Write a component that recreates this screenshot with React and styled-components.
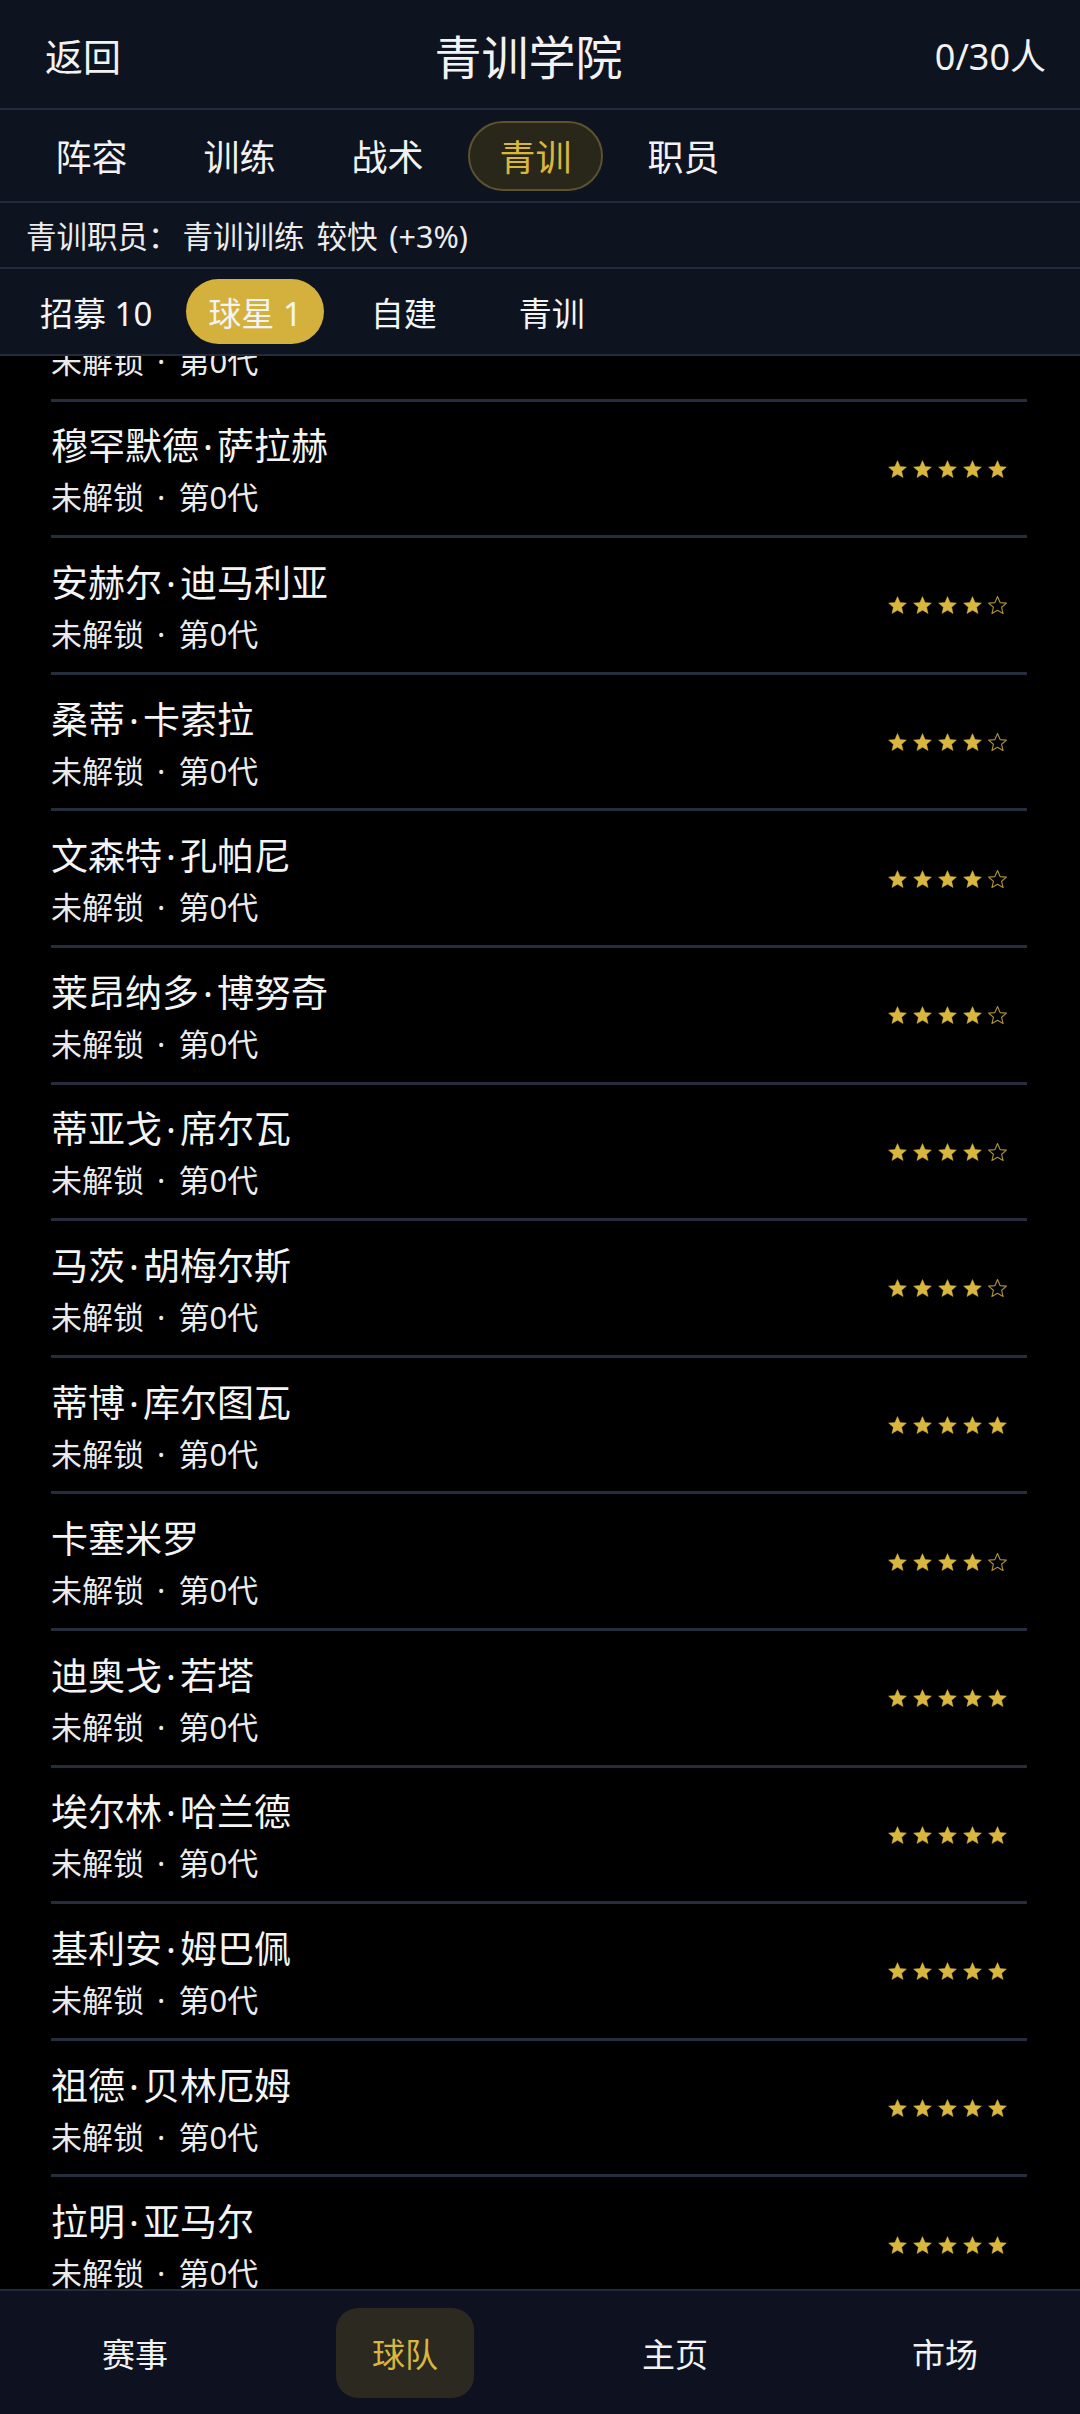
import React, { useLayoutEffect, useRef } from 'react';
import styled, { createGlobalStyle } from 'styled-components';

const GlobalStyle = createGlobalStyle`
  html, body {
    margin: 0;
    padding: 0;
    background: #000;
  }
  body {
    font-family: "Noto Sans", "Noto Sans CJK SC", sans-serif;
    color: #f2f2f2;
  }
  * {
    box-sizing: border-box;
  }
`;

const Screen = styled.div`
  width: 1080px;
  height: 2414px;
  display: flex;
  flex-direction: column;
  background: #000;
  overflow: hidden;
`;

const Header = styled.div`
  height: 110px;
  flex-shrink: 0;
  display: grid;
  grid-template-columns: 1fr auto 1fr;
  align-items: center;
  padding: 0 34px 0 45px;
  background: #0e1320;
  border-bottom: 2px solid #222a3b;
`;

const BackButton = styled.div`
  font-size: 38px;
  justify-self: start;
`;

const Title = styled.div`
  font-size: 47px;
  margin-right: 34px;
`;

const Count = styled.div`
  font-size: 36px;
  justify-self: end;
`;

const Bar = styled.div`
  flex-shrink: 0;
  display: flex;
  align-items: center;
  background: #0e1320;
  border-bottom: 2px solid #222a3b;
  height: ${(p) => p.$height}px;
  padding-left: ${(p) => p.$pad}px;
  gap: ${(p) => p.$gap}px;
`;

const TopTab = styled.div`
  min-width: 135px;
  height: 70px;
  display: flex;
  align-items: center;
  justify-content: center;
  font-size: 36px;
  border-radius: 35px;
  border: 2px solid ${(p) => (p.$active ? '#5c522f' : 'transparent')};
  background: ${(p) => (p.$active ? '#29261a' : 'transparent')};
  color: ${(p) => (p.$active ? '#d9b73f' : '#f2f2f2')};
`;

const InfoText = styled.div`
  font-size: 30.5px;
  color: #ececec;
  word-spacing: 4px;
`;

const Colon = styled.span`
  margin-right: 4px;
`;

const SubTab = styled.div`
  min-width: 136px;
  height: 65px;
  padding: 0 22px;
  display: flex;
  align-items: center;
  justify-content: center;
  font-size: 33px;
  border-radius: 33px;
  background: ${(p) => (p.$active ? '#d4b13c' : 'transparent')};
  color: #f4f4f4;
`;

const List = styled.div`
  flex: 1;
  overflow-y: auto;
  padding: 0 53px 0 51px;
  scrollbar-width: none;
  &::-webkit-scrollbar {
    display: none;
  }
`;

const Row = styled.div`
  height: 136.6px;
  display: flex;
  align-items: center;
  justify-content: space-between;
  border-bottom: 3px solid #262d3d;
  padding-right: 19px;
`;

const Info = styled.div`
  display: flex;
  flex-direction: column;
  gap: 10px;
  padding-top: 4px;
`;

const Name = styled.div`
  font-size: 37px;
  line-height: 44px;
  color: #f4f4f4;
`;

const Dot = styled.span`
  margin: 0 4px;
`;

const Sub = styled.div`
  font-size: 31px;
  line-height: 38px;
  color: #ebebeb;
  word-spacing: 5px;
`;

const Stars = styled.div`
  display: flex;
  gap: 4px;
  padding-top: 2px;
`;

const BottomNav = styled.div`
  height: 125px;
  flex-shrink: 0;
  display: grid;
  grid-template-columns: repeat(4, 1fr);
  align-items: center;
  justify-items: center;
  background: #0e1220;
  border-top: 2px solid #222a3b;
`;

const NavItem = styled.div`
  width: 138px;
  height: 90px;
  display: flex;
  align-items: center;
  justify-content: center;
  border-radius: 22px;
  font-size: 33px;
  background: ${(p) => (p.$active ? '#2c2920' : 'transparent')};
  color: ${(p) => (p.$active ? '#d9b73f' : '#f2f2f2')};
`;

const STAR = 'M12 1.8l2.95 6.85 7.25.62-5.5 4.78 1.66 7.15L12 17.4l-6.36 3.8 1.66-7.15-5.5-4.78 7.25-.62z';

const Star = ({ filled }) => (
  <svg width="21" height="21" viewBox="0 0 24 24">
    <path
      d={STAR}
      fill={filled ? '#d9b63e' : 'none'}
      stroke={filled ? '#d9b63e' : '#a88f3a'}
      strokeWidth={filled ? 0.5 : 1.3}
      strokeLinejoin="round"
    />
  </svg>
);

const players = [
  ['某某球员', 5],
  ['穆罕默德·萨拉赫', 5],
  ['安赫尔·迪马利亚', 4],
  ['桑蒂·卡索拉', 4],
  ['文森特·孔帕尼', 4],
  ['莱昂纳多·博努奇', 4],
  ['蒂亚戈·席尔瓦', 4],
  ['马茨·胡梅尔斯', 4],
  ['蒂博·库尔图瓦', 5],
  ['卡塞米罗', 4],
  ['迪奥戈·若塔', 5],
  ['埃尔林·哈兰德', 5],
  ['基利安·姆巴佩', 5],
  ['祖德·贝林厄姆', 5],
  ['拉明·亚马尔', 5],
];

const PlayerName = ({ name }) => {
  const parts = name.split('·');
  return (
    <Name>
      {parts.map((p, i) => (
        <React.Fragment key={i}>
          {i > 0 && <Dot>·</Dot>}
          {p}
        </React.Fragment>
      ))}
    </Name>
  );
};

const App = () => {
  const listRef = useRef(null);

  useLayoutEffect(() => {
    if (listRef.current) listRef.current.scrollTop = 91;
  }, []);

  return (
    <Screen>
      <GlobalStyle />
      <Header>
        <BackButton>返回</BackButton>
        <Title>青训学院</Title>
        <Count>0/30人</Count>
      </Header>

      <Bar $height={93} $pad={24} $gap={13}>
        {['阵容', '训练', '战术', '青训', '职员'].map((t) => (
          <TopTab key={t} $active={t === '青训'}>{t}</TopTab>
        ))}
      </Bar>

      <Bar $height={66} $pad={26} $gap={0}>
        <InfoText>青训职员<Colon>：</Colon>青训训练 较快 (+3%)</InfoText>
      </Bar>

      <Bar $height={87} $pad={18} $gap={12}>
        {['招募 10', '球星 1', '自建', '青训'].map((t) => (
          <SubTab key={t} $active={t === '球星 1'}>{t}</SubTab>
        ))}
      </Bar>

      <List ref={listRef}>
        {players.map(([name, stars]) => (
          <Row key={name}>
            <Info>
              <PlayerName name={name} />
              <Sub>未解锁 · 第0代</Sub>
            </Info>
            <Stars>
              {[0, 1, 2, 3, 4].map((i) => (
                <Star key={i} filled={i < stars} />
              ))}
            </Stars>
          </Row>
        ))}
      </List>

      <BottomNav>
        {['赛事', '球队', '主页', '市场'].map((t) => (
          <NavItem key={t} $active={t === '球队'}>{t}</NavItem>
        ))}
      </BottomNav>
    </Screen>
  );
};

export default App;
